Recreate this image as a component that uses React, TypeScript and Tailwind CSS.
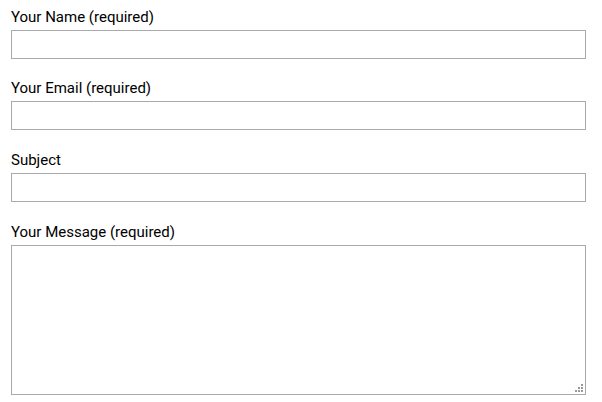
export default function App() {
  const fields = [
    { label: 'Your Name (required)', type: 'text', gap: 'mb-[19px]' },
    { label: 'Your Email (required)', type: 'email', gap: 'mb-[20px]' },
    { label: 'Subject', type: 'text', gap: 'mb-[20px]' },
  ];

  // dotted resize grip, lower right of the message box
  const grip = [
    [6, 0],
    [3, 3],
    [6, 3],
    [0, 6],
    [3, 6],
    [6, 6],
  ];

  return (
    <div className="w-[602px] h-[402px] bg-white pl-[11px] pr-[16px] pt-[7px] font-['Roboto',sans-serif] text-[15px] text-black">
      <form className="flex flex-col">
        {fields.map((f) => (
          <p key={f.label} className={`flex flex-col ${f.gap}`}>
            <label className="leading-[20px] h-[20px] mb-[3px]">{f.label}</label>
            <input
              type={f.type}
              className="h-[29px] w-full border border-[#a9a9a9] bg-white px-1 outline-none"
            />
          </p>
        ))}
        <p className="flex flex-col">
          <label className="leading-[20px] h-[20px] mb-[3px]">Your Message (required)</label>
          <span className="relative block">
            <textarea className="block h-[150px] w-full resize-none border border-[#a9a9a9] bg-white px-1 outline-none" />
            <svg className="absolute right-[3px] bottom-[3px]" width="8" height="8" viewBox="0 0 8 8">
              {grip.map(([x, y]) => (
                <rect key={`${x}-${y}`} x={x} y={y} width="2" height="2" fill="#9a9a9a" />
              ))}
            </svg>
          </span>
        </p>
      </form>
    </div>
  );
}
